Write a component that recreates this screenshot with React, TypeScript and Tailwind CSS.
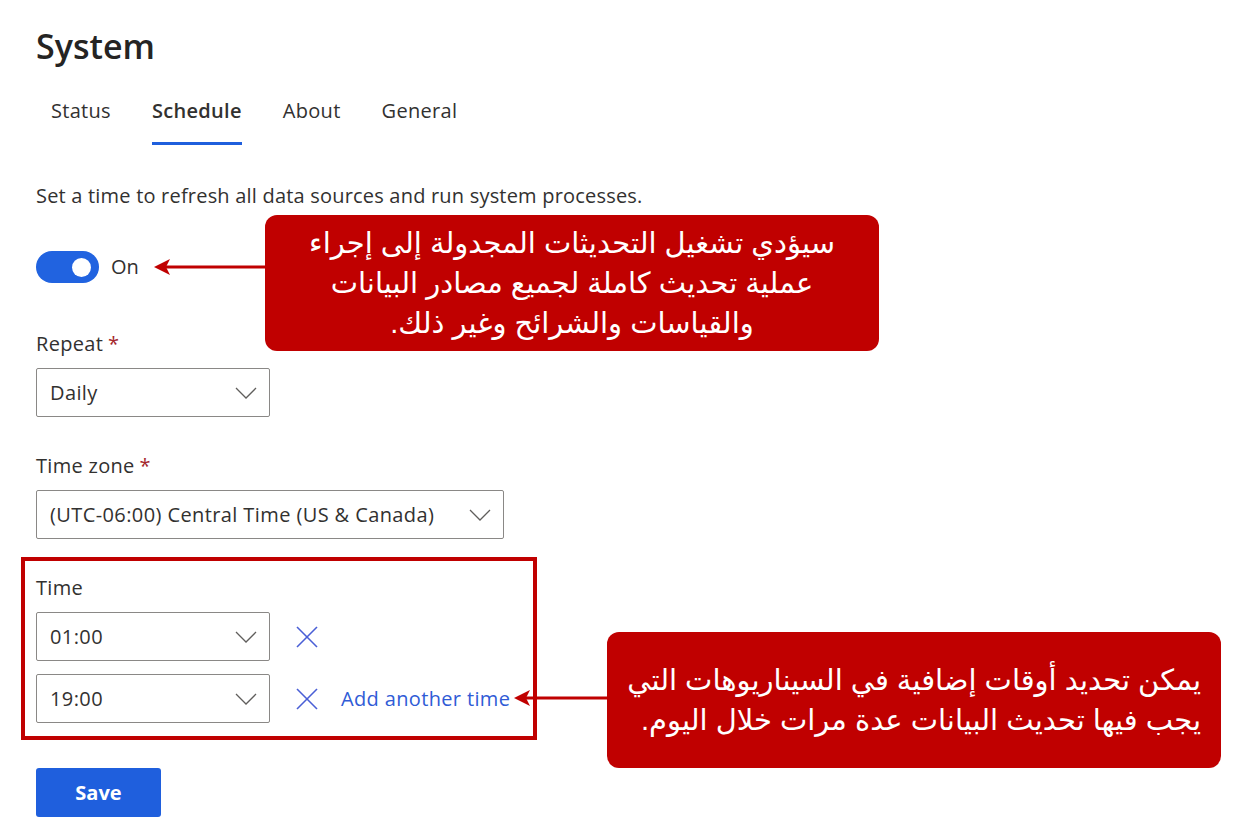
import React from 'react';

const font = { fontFamily: '"Open Sans", "Noto Sans", sans-serif' };

const Chevron: React.FC = () => (
  <svg width="22" height="12" viewBox="0 0 22 12" fill="none">
    <polyline points="1,1 11,11 21,1" stroke="#605e5c" strokeWidth="1.3" />
  </svg>
);

const Close: React.FC = () => (
  <svg width="22" height="22" viewBox="0 0 22 22" fill="none">
    <line x1="1" y1="1" x2="21" y2="21" stroke="#4a5fd6" strokeWidth="1.6" />
    <line x1="21" y1="1" x2="1" y2="21" stroke="#4a5fd6" strokeWidth="1.6" />
  </svg>
);

const Select: React.FC<{ value: string; width: string }> = ({ value, width }) => (
  <div
    className={`${width} h-[49px] flex items-center justify-between pl-[13px] pr-[12px] border border-[#8a8886] rounded-[2px] text-[20px] tracking-[0.4px] text-[#323130]`}
  >
    <span>{value}</span>
    <Chevron />
  </div>
);

const Label: React.FC<{ text: string; required?: boolean; className?: string }> = ({ text, required, className }) => (
  <div className={`leading-[24px] text-[20px] tracking-[0.3px] text-[#323130] ${className ?? ''}`}>
    {text}
    {required && <span className="text-[#a4262c] ml-[5px]">*</span>}
  </div>
);

const Callout: React.FC<{ lines: string[]; className: string; align: string }> = ({ lines, className, align }) => (
  <div
    dir="rtl"
    className={`absolute bg-[#c00000] rounded-[12px] text-white text-[29px] leading-[40px] flex flex-col justify-center ${align} ${className}`}
    style={{ fontFamily: '"Liberation Sans", "DejaVu Sans", sans-serif' }}
  >
    {lines.map((l) => (
      <div key={l}>{l}</div>
    ))}
  </div>
);

export default function App() {
  return (
    <div className="relative w-[1246px] h-[835px] bg-white pl-[36px] overflow-hidden" style={font}>
      <h1 className="pt-[26px] text-[34px] leading-[40px] font-semibold text-[#252423]">System</h1>

      {/* Tabs */}
      <div className="mt-[31px] ml-[15px] flex gap-[41px] text-[20px] leading-[28px] tracking-[0.3px] text-[#323130]">
        <span className="pb-[20px]">Status</span>
        <span className="pb-[17px] font-semibold border-b-[3px] border-[#1f5fdd]">Schedule</span>
        <span className="pb-[20px]">About</span>
        <span className="pb-[20px]">General</span>
      </div>

      <p className="mt-[39px] text-[20px] leading-[24px] tracking-[0.2px] text-[#323130]">
        Set a time to refresh all data sources and run system processes.
      </p>

      {/* Toggle */}
      <div className="mt-[43px] flex items-center gap-[12px]">
        <div className="w-[63px] h-[32px] rounded-full bg-[#2163e0] flex items-center justify-end pr-[8px]">
          <div className="w-[19px] h-[19px] rounded-full bg-white" />
        </div>
        <span className="text-[20px] text-[#323130]">On</span>
      </div>

      <Label text="Repeat" required className="mt-[49px]" />
      <div className="mt-[12px]">
        <Select value="Daily" width="w-[234px]" />
      </div>

      <Label text="Time zone" required className="mt-[37px]" />
      <div className="mt-[12px]">
        <Select value="(UTC-06:00) Central Time (US & Canada)" width="w-[468px]" />
      </div>

      {/* Time section, highlighted */}
      <div className="mt-[18px] -ml-[15px] w-[516px] border-4 border-[#c00000] pl-[11px] pt-[15px] pb-[13px]">
        <Label text="Time" />
        <div className="mt-[12px] flex items-center">
          <Select value="01:00" width="w-[234px]" />
          <span className="ml-[26px]"><Close /></span>
        </div>
        <div className="mt-[13px] flex items-center">
          <Select value="19:00" width="w-[234px]" />
          <span className="ml-[26px]"><Close /></span>
          <span className="ml-[23px] text-[20px] tracking-[0.35px] text-[#2f5bd6]">Add another time</span>
        </div>
      </div>

      <button className="mt-[28px] w-[125px] h-[49px] rounded-[3px] bg-[#1f5fdd] text-white text-[20px] font-bold">
        Save
      </button>

      {/* Callout 1 */}
      <Callout
        className="left-[265px] top-[215px] w-[614px] h-[136px]"
        align="items-center text-center"
        lines={[
          'سيؤدي تشغيل التحديثات المجدولة إلى إجراء',
          'عملية تحديث كاملة لجميع مصادر البيانات',
          'والقياسات والشرائح وغير ذلك.',
        ]}
      />
      <svg className="absolute left-[150px] top-[257px]" width="118" height="20" viewBox="0 0 118 20">
        <line x1="14" y1="10" x2="118" y2="10" stroke="#c00000" strokeWidth="3" />
        <polygon points="4,10 20,2 16,10 20,18" fill="#c00000" />
      </svg>

      {/* Callout 2 */}
      <Callout
        className="left-[607px] top-[632px] w-[614px] h-[136px] pr-[20px] pl-[16px]"
        align="items-start text-right"
        lines={[
          'يمكن تحديد أوقات إضافية في السيناريوهات التي',
          'يجب فيها تحديث البيانات عدة مرات خلال اليوم.',
        ]}
      />
      <svg className="absolute left-[510px] top-[688px]" width="100" height="20" viewBox="0 0 100 20">
        <line x1="14" y1="10" x2="100" y2="10" stroke="#c00000" strokeWidth="3" />
        <polygon points="4,10 20,2 16,10 20,18" fill="#c00000" />
      </svg>
    </div>
  );
}
